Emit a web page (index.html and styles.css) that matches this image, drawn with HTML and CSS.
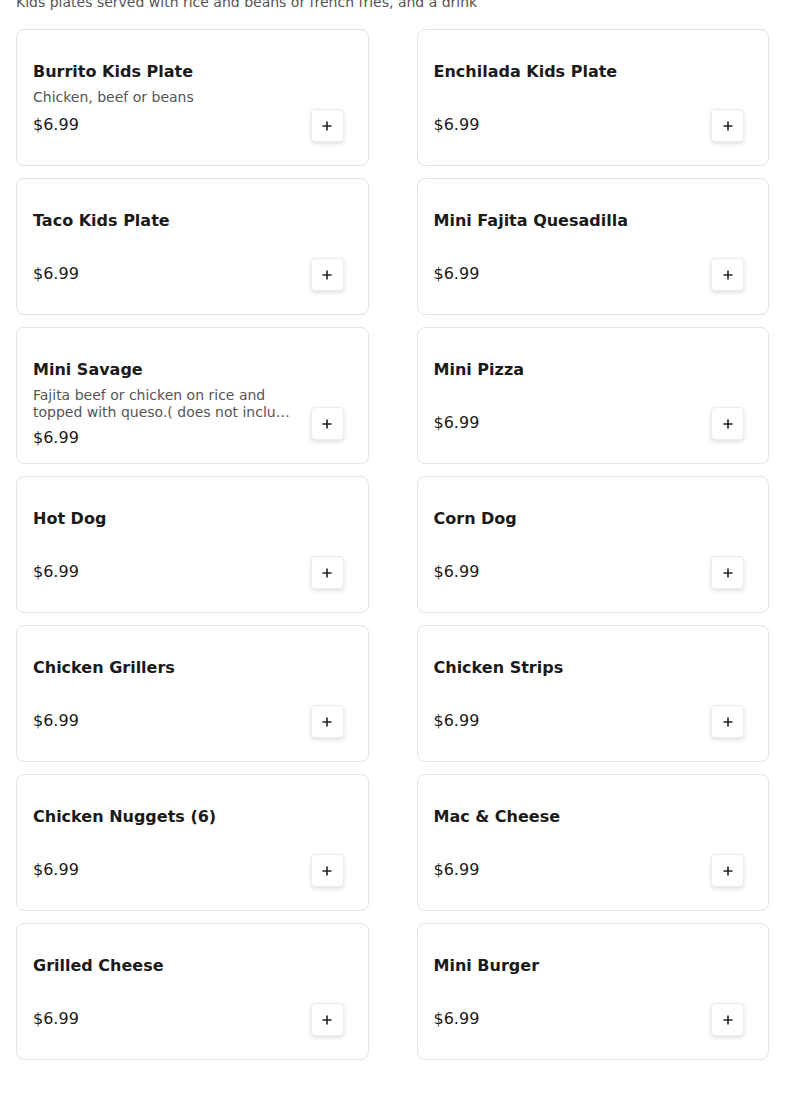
FILE: index.html
```html
<!DOCTYPE html>
<html lang="en">
<head>
    <meta charset="UTF-8">
    <meta name="viewport" content="width=device-width, initial-scale=1.0">
    <title>Kids Menu</title>
    <link rel="stylesheet" href="styles.css">
</head>
<body>

    <section class="menu-section">
        <p class="section-note">Kids plates served with rice and beans or french fries, and a drink</p>

        <div class="item-grid">
            <div class="item-card">
                <div class="item-info">
                    <h3 class="item-name">Burrito Kids Plate</h3>
                    <p class="item-desc">Chicken, beef or beans</p>
                    <p class="item-price">$6.99</p>
                </div>
                <button class="add-btn" aria-label="Add">
                    <svg width="12" height="12" viewBox="0 0 12 12"><path d="M6 1.5v9M1.5 6h9" stroke="#222" stroke-width="1.6"/></svg>
                </button>
            </div>
            <div class="item-card">
                <div class="item-info">
                    <h3 class="item-name">Enchilada Kids Plate</h3>
                    <p class="item-desc"></p>
                    <p class="item-price">$6.99</p>
                </div>
                <button class="add-btn" aria-label="Add">
                    <svg width="12" height="12" viewBox="0 0 12 12"><path d="M6 1.5v9M1.5 6h9" stroke="#222" stroke-width="1.6"/></svg>
                </button>
            </div>
            <div class="item-card">
                <div class="item-info">
                    <h3 class="item-name">Taco Kids Plate</h3>
                    <p class="item-desc"></p>
                    <p class="item-price">$6.99</p>
                </div>
                <button class="add-btn" aria-label="Add">
                    <svg width="12" height="12" viewBox="0 0 12 12"><path d="M6 1.5v9M1.5 6h9" stroke="#222" stroke-width="1.6"/></svg>
                </button>
            </div>
            <div class="item-card">
                <div class="item-info">
                    <h3 class="item-name">Mini Fajita Quesadilla</h3>
                    <p class="item-desc"></p>
                    <p class="item-price">$6.99</p>
                </div>
                <button class="add-btn" aria-label="Add">
                    <svg width="12" height="12" viewBox="0 0 12 12"><path d="M6 1.5v9M1.5 6h9" stroke="#222" stroke-width="1.6"/></svg>
                </button>
            </div>
            <div class="item-card">
                <div class="item-info">
                    <h3 class="item-name">Mini Savage</h3>
                    <p class="item-desc">Fajita beef or chicken on rice and topped with queso.( does not include rice and beans or fries)</p>
                    <p class="item-price">$6.99</p>
                </div>
                <button class="add-btn" aria-label="Add">
                    <svg width="12" height="12" viewBox="0 0 12 12"><path d="M6 1.5v9M1.5 6h9" stroke="#222" stroke-width="1.6"/></svg>
                </button>
            </div>
            <div class="item-card">
                <div class="item-info">
                    <h3 class="item-name">Mini Pizza</h3>
                    <p class="item-desc"></p>
                    <p class="item-price">$6.99</p>
                </div>
                <button class="add-btn" aria-label="Add">
                    <svg width="12" height="12" viewBox="0 0 12 12"><path d="M6 1.5v9M1.5 6h9" stroke="#222" stroke-width="1.6"/></svg>
                </button>
            </div>
            <div class="item-card">
                <div class="item-info">
                    <h3 class="item-name">Hot Dog</h3>
                    <p class="item-desc"></p>
                    <p class="item-price">$6.99</p>
                </div>
                <button class="add-btn" aria-label="Add">
                    <svg width="12" height="12" viewBox="0 0 12 12"><path d="M6 1.5v9M1.5 6h9" stroke="#222" stroke-width="1.6"/></svg>
                </button>
            </div>
            <div class="item-card">
                <div class="item-info">
                    <h3 class="item-name">Corn Dog</h3>
                    <p class="item-desc"></p>
                    <p class="item-price">$6.99</p>
                </div>
                <button class="add-btn" aria-label="Add">
                    <svg width="12" height="12" viewBox="0 0 12 12"><path d="M6 1.5v9M1.5 6h9" stroke="#222" stroke-width="1.6"/></svg>
                </button>
            </div>
            <div class="item-card">
                <div class="item-info">
                    <h3 class="item-name">Chicken Grillers</h3>
                    <p class="item-desc"></p>
                    <p class="item-price">$6.99</p>
                </div>
                <button class="add-btn" aria-label="Add">
                    <svg width="12" height="12" viewBox="0 0 12 12"><path d="M6 1.5v9M1.5 6h9" stroke="#222" stroke-width="1.6"/></svg>
                </button>
            </div>
            <div class="item-card">
                <div class="item-info">
                    <h3 class="item-name">Chicken Strips</h3>
                    <p class="item-desc"></p>
                    <p class="item-price">$6.99</p>
                </div>
                <button class="add-btn" aria-label="Add">
                    <svg width="12" height="12" viewBox="0 0 12 12"><path d="M6 1.5v9M1.5 6h9" stroke="#222" stroke-width="1.6"/></svg>
                </button>
            </div>
            <div class="item-card">
                <div class="item-info">
                    <h3 class="item-name">Chicken Nuggets (6)</h3>
                    <p class="item-desc"></p>
                    <p class="item-price">$6.99</p>
                </div>
                <button class="add-btn" aria-label="Add">
                    <svg width="12" height="12" viewBox="0 0 12 12"><path d="M6 1.5v9M1.5 6h9" stroke="#222" stroke-width="1.6"/></svg>
                </button>
            </div>
            <div class="item-card">
                <div class="item-info">
                    <h3 class="item-name">Mac &amp; Cheese</h3>
                    <p class="item-desc"></p>
                    <p class="item-price">$6.99</p>
                </div>
                <button class="add-btn" aria-label="Add">
                    <svg width="12" height="12" viewBox="0 0 12 12"><path d="M6 1.5v9M1.5 6h9" stroke="#222" stroke-width="1.6"/></svg>
                </button>
            </div>
            <div class="item-card">
                <div class="item-info">
                    <h3 class="item-name">Grilled Cheese</h3>
                    <p class="item-desc"></p>
                    <p class="item-price">$6.99</p>
                </div>
                <button class="add-btn" aria-label="Add">
                    <svg width="12" height="12" viewBox="0 0 12 12"><path d="M6 1.5v9M1.5 6h9" stroke="#222" stroke-width="1.6"/></svg>
                </button>
            </div>
            <div class="item-card">
                <div class="item-info">
                    <h3 class="item-name">Mini Burger</h3>
                    <p class="item-desc"></p>
                    <p class="item-price">$6.99</p>
                </div>
                <button class="add-btn" aria-label="Add">
                    <svg width="12" height="12" viewBox="0 0 12 12"><path d="M6 1.5v9M1.5 6h9" stroke="#222" stroke-width="1.6"/></svg>
                </button>
            </div>
        </div>
    </section>

</body>
</html>
```

FILE: styles.css
```css
/* styles.css */
body {
    margin: 0;
    font-family: "DejaVu Sans", sans-serif;
    color: #1a1a1a;
    background: #fff;
}

.menu-section {
    padding: 0 16px;
}

.section-note {
    margin: -8px 0 17px;
    font-size: 14px;
    line-height: 20px;
    color: #555;
}

.item-grid {
    display: grid;
    grid-template-columns: 1fr 1fr;
    column-gap: 48px;
    row-gap: 12px;
}

.item-card {
    display: flex;
    gap: 16px;
    height: 137px;
    box-sizing: border-box;
    padding: 30px 24px 23px 16px;
    border: 1px solid #e4e4e4;
    border-radius: 8px;
    background: #fff;
}

.item-info {
    flex: 1;
    min-width: 0;
}

.item-name {
    margin: 0;
    font-size: 16px;
    line-height: 24px;
    font-weight: bold;
    color: #1a1a1a;
}

.item-desc {
    margin: 5px 0 0;
    min-height: 19px;
    font-size: 14px;
    line-height: 17px;
    color: #555;
    display: -webkit-box;
    -webkit-line-clamp: 2;
    -webkit-box-orient: vertical;
    overflow: hidden;
}

.item-price {
    margin: 5px 0 0;
    font-size: 16px;
    line-height: 24px;
    color: #1a1a1a;
}

.add-btn {
    align-self: flex-end;
    flex-shrink: 0;
    width: 33px;
    height: 33px;
    padding: 0;
    display: flex;
    align-items: center;
    justify-content: center;
    border: 1px solid #ececec;
    border-radius: 4px;
    background: #fff;
    box-shadow: 0 2px 4px rgba(0, 0, 0, 0.12);
    cursor: pointer;
}
```
